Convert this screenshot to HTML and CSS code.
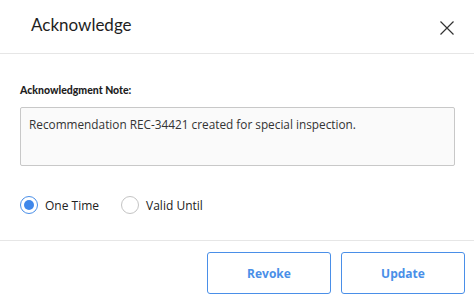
FILE: index.html
```html
<!DOCTYPE html>
<html lang="en">

<head>
    <meta charset="UTF-8">
    <meta name="viewport" content="width=device-width, initial-scale=1.0">
    <title>Acknowledge</title>
    <link rel="stylesheet" href="styles.css">
</head>

<body>
    <div class="dialog">
        <div class="dialog-header">
            <h1>Acknowledge</h1>
            <button class="close-btn" aria-label="Close">
                <svg width="14" height="14" viewBox="0 0 14 14">
                    <path d="M0.5 0.5 L13.5 13.5 M13.5 0.5 L0.5 13.5" stroke="#333" stroke-width="1.2" fill="none" />
                </svg>
            </button>
        </div>
        <div class="dialog-body">
            <label class="field-label" for="note">Acknowledgment Note:</label>
            <textarea id="note" class="note">Recommendation REC-34421 created for special inspection.</textarea>
            <div class="radio-row">
                <label class="radio">
                    <span class="radio-dot checked"></span>
                    One Time
                </label>
                <label class="radio">
                    <span class="radio-dot"></span>
                    Valid Until
                </label>
            </div>
        </div>
        <div class="dialog-footer">
            <button class="btn">Revoke</button>
            <button class="btn">Update</button>
        </div>
    </div>
</body>

</html>
```

FILE: styles.css
```css
body {
    margin: 0;
    padding: 0;
    background-color: #fff;
    font-family: "Open Sans", sans-serif;
    color: #222;
}

.dialog {
    width: 474px;
    height: 305px;
    display: flex;
    flex-direction: column;
}

.dialog-header {
    display: flex;
    align-items: center;
    justify-content: space-between;
    height: 54px;
    padding: 0 20px 0 31px;
    border-bottom: 1px solid #e6e6e6;
    box-sizing: border-box;
}

.dialog-header h1 {
    margin: 0;
    font-family: "Lato", sans-serif;
    font-size: 17px;
    font-weight: normal;
    color: #1e1e1e;
    position: relative;
    top: -2px;
}

.close-btn {
    background: none;
    border: none;
    padding: 0;
    width: 14px;
    height: 14px;
    cursor: pointer;
    position: relative;
    top: 1px;
}

.close-btn svg {
    display: block;
}

.dialog-body {
    padding: 30px 19px 0 20px;
    height: 187px;
    box-sizing: border-box;
    border-bottom: 1px solid #e6e6e6;
}

.field-label {
    display: block;
    font-family: "Lato", sans-serif;
    font-size: 10.5px;
    font-weight: 900;
    color: #1e1e1e;
    margin-bottom: 11px;
}

.note {
    display: block;
    width: 435px;
    height: 59px;
    box-sizing: border-box;
    padding: 8px 8px;
    border: 1px solid #c8c8c8;
    border-radius: 2px;
    background-color: #fafafa;
    font-family: "Open Sans", sans-serif;
    font-size: 11.8px;
    color: #333;
    resize: none;
}

.radio-row {
    display: flex;
    gap: 22px;
    margin-top: 30px;
}

.radio {
    display: flex;
    align-items: center;
    gap: 7px;
    font-family: "Open Sans", sans-serif;
    font-size: 12px;
    color: #222;
}

.radio-dot {
    width: 18px;
    height: 18px;
    box-sizing: border-box;
    border: 1px solid #c4c4c4;
    border-radius: 50%;
    display: flex;
    align-items: center;
    justify-content: center;
}

.radio-dot.checked {
    border-color: #4a8fe8;
}

.radio-dot.checked::after {
    content: "";
    width: 10px;
    height: 10px;
    border-radius: 50%;
    background-color: #3f87ea;
}

.dialog-footer {
    display: flex;
    justify-content: flex-end;
    gap: 10px;
    padding: 11px 9px 0 0;
}

.btn {
    width: 124px;
    height: 42px;
    background-color: #fff;
    border: 1px solid #4a8fe8;
    border-radius: 3px;
    color: #4a8fe8;
    font-family: "Open Sans", sans-serif;
    font-size: 12px;
    font-weight: bold;
    cursor: pointer;
}
```
